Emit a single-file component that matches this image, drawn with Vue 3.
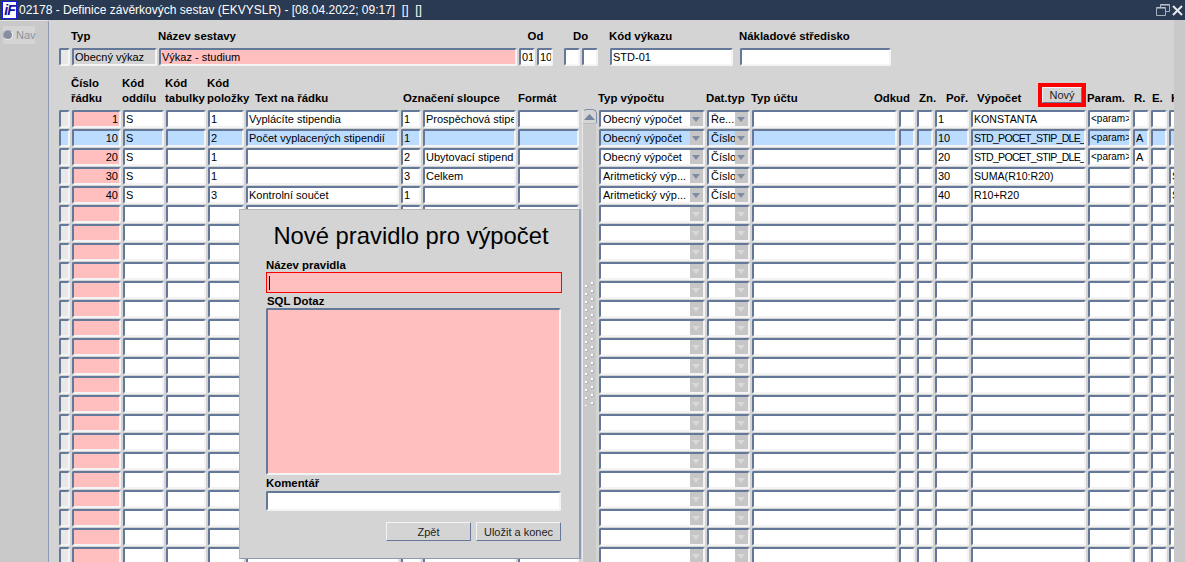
<script setup>
const cols = [
  { k: 'mark', c: 'mark' }, { k: 'num', c: 'num' }, { k: 'odd' }, { k: 'tab' }, { k: 'pol' },
  { k: 'text' }, { k: 's1' }, { k: 's2' }, { k: 'fmt' },
  { k: 'typ', dd: true }, { k: 'dat', dd: true }, { k: 'ucet' }, { k: 'odk' }, { k: 'zn' },
  { k: 'por' }, { k: 'vyp', c: 'vyp' }, { k: 'par', c: 'small' }, { k: 'r' }, { k: 'e' }, { k: 'kk' }
]
const filled = [
  { num: '1', odd: 'S', pol: '1', text: 'Vyplácíte stipendia', s1: '1', s2: 'Prospěchová stipendia', typ: 'Obecný výpočet', dat: 'Ře...', por: '1', vyp: 'KONSTANTA', par: '<param>' },
  { num: '10', odd: 'S', pol: '2', text: 'Počet vyplacených stipendií', s1: '1', typ: 'Obecný výpočet', dat: 'Číslo', por: '10', vyp: 'STD_POCET_STIP_DLE_TYPU', par: '<param>', r: 'A', active: true },
  { num: '20', odd: 'S', pol: '1', s1: '2', s2: 'Ubytovací stipendia', typ: 'Obecný výpočet', dat: 'Číslo', por: '20', vyp: 'STD_POCET_STIP_DLE_TYPU', par: '<param>', r: 'A' },
  { num: '30', odd: 'S', pol: '1', s1: '3', s2: 'Celkem', typ: 'Aritmetický výp...', dat: 'Číslo', por: '30', vyp: 'SUMA(R10:R20)', kk: 'S' },
  { num: '40', odd: 'S', pol: '3', text: 'Kontrolní součet', s1: '1', typ: 'Aritmetický výp...', dat: 'Číslo', por: '40', vyp: 'R10+R20', kk: 'S' }
]
const rows = [...filled, ...Array.from({ length: 19 }, () => ({}))]
const isTight = (col, row) => col.k === 'vyp' && (row.vyp || '').startsWith('STD')
</script>

<template>
  <div class="app">
    <header class="titlebar">
      <span class="logo"><i>iF</i></span>
      <span class="title">02178 - Definice závěrkových sestav (EKVYSLR) - [08.04.2022; 09:17]&nbsp;&nbsp;[]&nbsp;&nbsp;[]</span>
      <span class="winbtns">
        <svg width="14" height="12" viewBox="0 0 14 12"><path d="M4.5 3V.5h9v7H10M.5 3.5h9v8h-9z" fill="none" stroke="#aab1bd"/><path d="M.5 4h9M4.5 1h9" stroke="#c8cdd5" fill="none"/></svg>
        <svg width="11" height="11" viewBox="0 0 11 11"><path d="M1 1l9 9M10 1l-9 9" stroke="#e6e9ee" stroke-width="2"/></svg>
      </span>
    </header>
    <div class="body">
      <aside class="nav">
        <div class="navitem"><span class="radio"></span><span>Nav</span></div>
      </aside>
      <main class="main">
        <div class="formrow">
          <div class="grp g-mark"><label></label><div class="fields"><div class="cell mark"></div></div></div>
          <div class="grp g-typ"><label>Typ</label><div class="fields"><div class="cell ro">Obecný výkaz</div></div></div>
          <div class="grp g-naz"><label>Název sestavy</label><div class="fields"><div class="cell pink">Výkaz - studium</div></div></div>
          <div class="grp g-od"><label class="ctr">Od</label><div class="fields"><div class="cell">01</div><div class="cell">10</div></div></div>
          <div class="grp g-do"><label class="ctr">Do</label><div class="fields"><div class="cell"></div><div class="cell"></div></div></div>
          <div class="grp g-kod"><label>Kód výkazu</label><div class="fields"><div class="cell">STD-01</div></div></div>
          <div class="grp g-nak"><label>Nákladové středisko</label><div class="fields"><div class="cell"></div></div></div>
        </div>

        <div class="grid heads">
          <div class="h" style="grid-column:2">Číslo<br>řádku</div>
          <div class="h" style="grid-column:3">Kód<br>oddílu</div>
          <div class="h" style="grid-column:4">Kód<br>tabulky</div>
          <div class="h" style="grid-column:5">Kód<br>položky</div>
          <div class="h pad10" style="grid-column:6">Text na řádku</div>
          <div class="h pad3" style="grid-column:7 / span 2">Označení sloupce</div>
          <div class="h pad1" style="grid-column:9">Formát</div>
          <div class="h" style="grid-column:11">Typ výpočtu</div>
          <div class="h" style="grid-column:12">Dat.typ</div>
          <div class="h between" style="grid-column:13 / span 2"><span>Typ účtu</span><span>Odkud</span></div>
          <div class="h pad3" style="grid-column:15">Zn.</div>
          <div class="h pad12" style="grid-column:16">Poř.</div>
          <div class="h vypo" style="grid-column:17"><span>Výpočet</span><span class="novy"><button class="btn">Nový</button></span></div>
          <div class="h" style="grid-column:18">Param.</div>
          <div class="h pad2" style="grid-column:19">R.</div>
          <div class="h pad2" style="grid-column:20">E.</div>
          <div class="h pad3" style="grid-column:21">K</div>
        </div>

        <div class="grid table">
          <div class="scroll">
            <div class="up"><svg width="11" height="6" viewBox="0 0 11 6"><path d="M5.5 0L11 6H0z" fill="#74859f"/></svg></div>
            <svg class="grip" width="12" height="124" viewBox="0 0 12 124">
              <defs>
                <pattern id="gr" width="12" height="8" patternUnits="userSpaceOnUse">
                  <rect x="7" y="0" width="3" height="3" fill="#a9b6c8"/><rect x="7" y="0" width="2" height="2" fill="#fff"/>
                  <rect x="1" y="3" width="3" height="3" fill="#a9b6c8"/><rect x="1" y="3" width="2" height="2" fill="#fff"/>
                </pattern>
              </defs>
              <rect width="12" height="124" fill="url(#gr)"/>
            </svg>
          </div>
          <template v-for="(row, i) in rows" :key="i">
            <div v-for="col in cols" :key="col.k" class="cell" :class="[col.c, { dd: col.dd, active: row.active, on: col.dd && row[col.k], tight: isTight(col, row) }]">
              <span class="txt">{{ row[col.k] }}</span>
              <span v-if="col.dd" class="arrow"></span>
            </div>
          </template>
        </div>
      </main>
      <div class="rstrip"></div>
    </div>

    <section class="modal">
      <h1>Nové pravidlo pro výpočet</h1>
      <label class="ml first">Název pravidla</label>
      <div class="minput req"><span class="caret"></span></div>
      <label class="ml second">SQL Dotaz</label>
      <div class="marea"></div>
      <label class="ml third">Komentář</label>
      <div class="mcomment"></div>
      <div class="actions">
        <button class="btn zpet">Zpět</button>
        <button class="btn ulozit">Uložit a konec</button>
      </div>
    </section>
  </div>
</template>

<style>
html, body { margin: 0; padding: 0; overflow: hidden; }
</style>

<style scoped>
.app {
  position: relative;
  width: 1185px;
  height: 562px;
  overflow: hidden;
  display: flex;
  flex-direction: column;
  background: #d4d4d4;
  font: 11px/14px "Liberation Sans", Arial, sans-serif;
  color: #000;
}
.titlebar {
  height: 20px;
  flex: none;
  background: #2a3a52;
  color: #fff;
  display: flex;
  align-items: center;
  padding-left: 2px;
  padding-right: 2px;
  font-size: 12px;
}
.logo {
  width: 13px;
  height: 16px;
  border: 1px solid #1a1ae0;
  background: #fff;
  color: #10109a;
  font: italic bold 14px/16px "Liberation Sans", sans-serif;
  text-align: center;
  margin-right: 2px;
  overflow: hidden;
}
.logo i { letter-spacing: -1px; }
.title { white-space: pre; flex: 1; }
.winbtns { display: flex; align-items: center; gap: 2px; }
.body { flex: 1; display: flex; min-height: 0; }
.nav {
  width: 48px;
  flex: none;
  background: #c9c9c9;
  border-right: 1px solid #8c9bb2;
  border-top: 1px solid #e2e2e2;
  box-sizing: content-box;
  border-top-right-radius: 3px;
}
.navitem {
  margin: 5px 0 0 3px;
  width: 32px;
  height: 18px;
  background: #d4d4d4;
  display: flex;
  align-items: center;
  color: #8b929c;
  gap: 3px;
}
.radio {
  width: 10px;
  height: 10px;
  box-sizing: border-box;
  border-radius: 50%;
  background: #858fa0;
  border: 1px solid;
  border-color: #9aa3b1 #f2f2f2 #f2f2f2 #9aa3b1;
  flex: none;
}
.main {
  width: 1125px;
  flex: none;
  box-sizing: border-box;
  padding-left: 10px;
  overflow: hidden;
}
.rstrip { flex: 1; background: #c9c9c9; }

.formrow { display: flex; height: 56px; padding-top: 9px; box-sizing: border-box; }
.grp { display: flex; flex-direction: column; }
.grp label { font-weight: bold; font-size: 11.4px; height: 19px; line-height: 15px; white-space: nowrap; margin-left: -1px; }
.grp label.ctr { text-align: center; }
.fields { display: flex; gap: 2px; }
.fields .cell { flex: 1; }
.g-mark { width: 11px; margin-right: 2px; }
.g-typ { width: 85px; margin-right: 2px; }
.g-naz { width: 358px; margin-right: 2px; }
.g-od { width: 34px; margin-right: 11px; }
.g-do { width: 34px; margin-right: 12px; }
.g-kod { width: 123px; margin-right: 7px; }
.g-nak { width: 151px; }

.grid {
  display: grid;
  width: 1130px;
  grid-template-columns: 11px 49px 41px 40px 36px 153px 20px 93px 61px 16px 106px 43px 145px 16px 16px 34px 115px 43px 16px 16px 16px;
  column-gap: 2px;
}
.heads { height: 34px; }
.h { font-weight: bold; font-size: 11.4px; line-height: 15px; align-self: end; white-space: nowrap; padding-bottom: 4px; min-width: 0; margin-left: -1px; }
.pad1 { padding-left: 1px; }
.pad2 { padding-left: 2px; }
.pad3 { padding-left: 3px; }
.pad10 { padding-left: 10px; }
.pad12 { padding-left: 12px; }
.between { display: flex; justify-content: space-between; padding-right: 5px; }
.vypo { padding-left: 7px; position: relative; }
.novy {
  position: absolute;
  right: 0;
  bottom: 3px;
  width: 48px;
  height: 24px;
  box-sizing: border-box;
  border: 4px solid #f00;
  display: flex;
}
.novy .btn { width: 100%; height: 100%; }

.table { grid-auto-rows: 18px; row-gap: 1px; }
.cell {
  box-sizing: border-box;
  height: 18px;
  border: 2px solid;
  border-color: #64789a #f4f4f4 #f4f4f4 #64789a;
  border-radius: 2px;
  background: #fff;
  padding: 0 0 0 1px;
  line-height: 14px;
  white-space: nowrap;
  overflow: hidden;
  position: relative;
  min-width: 0;
}
.txt { display: block; overflow: hidden; }
.mark { background: #e8e8e8; }
.num { background: #ffbfbf; text-align: right; padding-right: 1px; }
.small { font-size: 10px; }
.vyp { font-size: 10.6px; }
.tight { letter-spacing: -0.75px; }
.active { background: #bbdcff; }
.ro { background: #d4d4d4; }
.pink { background: #ffbfbf; }
.formrow .cell { height: 18px; }
.dd { padding-left: 2px; padding-right: 11px; }
.arrow {
  position: absolute;
  right: 0;
  top: 0;
  width: 13px;
  height: 14px;
  background: #c6c6c6;
}
.arrow::after {
  content: "";
  position: absolute;
  left: 2px;
  top: 5px;
  border-left: 4.5px solid transparent;
  border-right: 4.5px solid transparent;
  border-top: 5px solid #d9d9d9;
}
.on .arrow::after { border-top-color: #7d8ca3; }

.scroll {
  grid-column: 10;
  grid-row: 1 / span 24;
  margin-left: 1px;
  width: 14px;
  height: 460px;
  background: #c9c9c9;
  border-left: 1px solid #e8e8e8;
  box-sizing: border-box;
  position: relative;
}
.up {
  height: 15px;
  margin-top: -1px;
  margin-left: -1px;
  width: 15px;
  box-sizing: border-box;
  background: #d4d4d4;
  border: 1px solid;
  border-color: #7f8fa8 #7f8fa8 #b4bcc8 #e8e8e8;
  border-radius: 5px 5px 2px 2px;
  display: flex;
  align-items: center;
  justify-content: center;
}
.grip { position: absolute; left: 1px; top: 172px; }

.btn {
  box-sizing: border-box;
  font: 11px/14px "Liberation Sans", Arial, sans-serif;
  color: #222;
  background: #d4d4d4;
  border: 1px solid;
  border-color: #f4f4f4 #64789a #64789a #f4f4f4;
  border-radius: 1px;
  padding: 0;
}

.modal {
  position: absolute;
  left: 239px;
  top: 209px;
  width: 342px;
  height: 350px;
  box-sizing: border-box;
  background: #d4d4d4;
  border: 1px solid;
  border-color: #b8b8b8 #8a9ab2 #8a9ab2 #b8b8b8;
  border-right-width: 2px;
  padding: 0 18px 0 26px;
  display: flex;
  flex-direction: column;
}
.modal h1 {
  margin: 12px 0 0;
  font: normal 23.8px/28px "Liberation Sans", Arial, sans-serif;
  text-align: center;
  padding-right: 5px;
  color: #000;
}
.ml { font-weight: bold; font-size: 11.4px; line-height: 14px; }
.first { margin-top: 8px; }
.second { margin-top: 1px; padding-left: 1px; }
.third { margin-top: 1px; }
.minput {
  height: 21px;
  box-sizing: border-box;
  border: 1px solid #f00;
  background: #ffbfbf;
  padding: 3px 2px;
  width: 296px;
}
.caret { display: block; width: 1px; height: 14px; background: #000; }
.marea, .mcomment {
  box-sizing: border-box;
  width: 295px;
  border: 2px solid;
  border-color: #64789a #f4f4f4 #f4f4f4 #64789a;
  border-radius: 2px;
}
.marea { height: 167px; background: #ffbfbf; }
.mcomment { height: 20px; background: #fff; margin-top: 1px; }
.actions { display: flex; justify-content: flex-end; gap: 5px; margin-top: 11px; width: 295px; }
.zpet { width: 85px; height: 19px; }
.ulozit { width: 85px; height: 19px; }
</style>
